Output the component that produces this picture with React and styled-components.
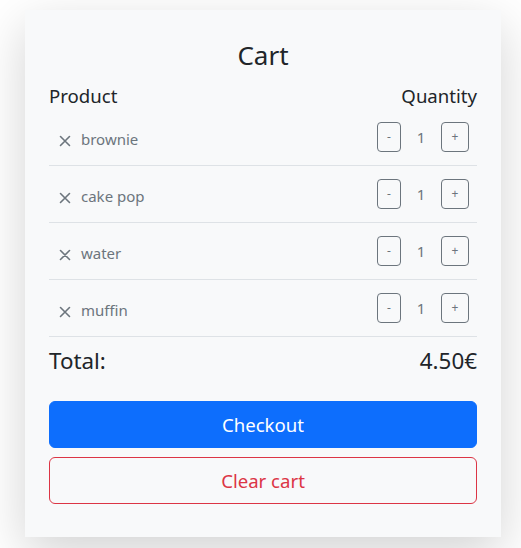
import React from "react";
import styled, { createGlobalStyle } from "styled-components";

const Global = createGlobalStyle`
  html, body { margin: 0; padding: 0; background: #fff; }
  body { font-family: "Noto Sans", "Open Sans", sans-serif; color: #212529; }
  * { box-sizing: border-box; }
`;

const Page = styled.div`
  padding: 10px 20px 12px 25px;
`;

const Card = styled.div`
  width: 476px;
  background: #f8f9fa;
  box-shadow: 0 1rem 3rem rgba(0, 0, 0, 0.175);
  padding: 28px 24px 33px;
  display: flex;
  flex-direction: column;
`;

const Title = styled.h3`
  margin: 0 0 9px;
  text-align: center;
  font-size: 26px;
  font-weight: 400;
  line-height: 34px;
`;

const Header = styled.div`
  display: flex;
  justify-content: space-between;
  font-size: 18.6px;
  line-height: 30px;
  margin-bottom: -2px;
`;

const List = styled.ul`
  list-style: none;
  margin: 0;
  padding: 0;
`;

const Row = styled.li`
  display: flex;
  align-items: center;
  justify-content: space-between;
  height: 57px;
  padding: 0 8px 0 10px;
  border-bottom: 1px solid #dee2e6;
  color: #6c757d;
`;

const Name = styled.div`
  display: flex;
  align-items: center;
  gap: 10px;
  font-size: 15px;
  padding-top: 4px;
`;

const Remove = styled.button`
  border: 0;
  background: none;
  padding: 0;
  display: flex;
  color: #6c757d;
  margin-top: 4px;
  cursor: pointer;
`;

const Qty = styled.div`
  display: flex;
  align-items: center;
`;

const SmallBtn = styled.button`
  font-family: inherit;
  font-size: 12px;
  line-height: 18px;
  height: 30px;
  width: ${(p) => p.$w}px;
  padding: 0;
  border: 1px solid #6c757d;
  border-radius: 4px;
  background: transparent;
  color: #6c757d;
  display: flex;
  align-items: center;
  justify-content: center;
`;

const Count = styled.span`
  width: 40px;
  text-align: center;
  font-size: 15px;
  color: #6c757d;
`;

const Total = styled.div`
  display: flex;
  justify-content: space-between;
  font-size: 22.4px;
  line-height: 36px;
  margin: 6px 0 22px;
`;

const BigBtn = styled.button`
  font-family: inherit;
  font-size: 18.6px;
  line-height: 30px;
  height: 47px;
  border-radius: 6px;
  width: 100%;
  border: 1px solid ${(p) => (p.$variant === "danger" ? "#dc3545" : "#0d6efd")};
  background: ${(p) => (p.$variant === "danger" ? "transparent" : "#0d6efd")};
  color: ${(p) => (p.$variant === "danger" ? "#dc3545" : "#fff")};
  & + & { margin-top: 9px; }
`;

const XIcon = () => (
  <svg width="12" height="12" viewBox="0 0 12 12">
    <path d="M1.5 1.5L10.5 10.5M10.5 1.5L1.5 10.5" stroke="currentColor" strokeWidth="1.6" strokeLinecap="round" />
  </svg>
);

const items = ["brownie", "cake pop", "water", "muffin"];

export default function App() {
  return (
    <>
      <Global />
      <Page>
        <Card>
          <Title>Cart</Title>
          <Header>
            <span>Product</span>
            <span>Quantity</span>
          </Header>
          <List>
            {items.map((it) => (
              <Row key={it}>
                <Name>
                  <Remove aria-label="remove"><XIcon /></Remove>
                  <span>{it}</span>
                </Name>
                <Qty>
                  <SmallBtn $w={24}>-</SmallBtn>
                  <Count>1</Count>
                  <SmallBtn $w={28}>+</SmallBtn>
                </Qty>
              </Row>
            ))}
          </List>
          <Total>
            <span>Total:</span>
            <span>4.50€</span>
          </Total>
          <BigBtn>Checkout</BigBtn>
          <BigBtn $variant="danger">Clear cart</BigBtn>
        </Card>
      </Page>
    </>
  );
}
